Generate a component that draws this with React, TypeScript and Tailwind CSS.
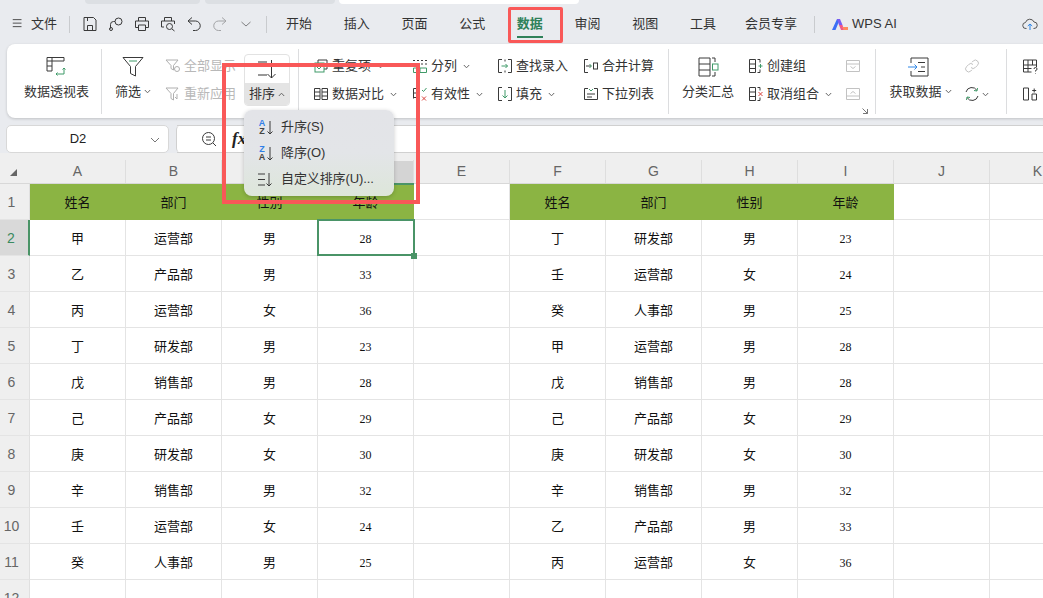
import type { ReactNode } from "react";

const uiFont = { fontFamily: '"Liberation Sans", "Noto Sans CJK SC", sans-serif' };
const cellFont = { fontFamily: '"Liberation Serif", "Noto Sans CJK SC", serif' };

const leftRows = [
  ["甲", "运营部", "男", "28"],
  ["乙", "产品部", "男", "33"],
  ["丙", "运营部", "女", "36"],
  ["丁", "研发部", "男", "23"],
  ["戊", "销售部", "男", "28"],
  ["己", "产品部", "女", "29"],
  ["庚", "研发部", "女", "30"],
  ["辛", "销售部", "男", "32"],
  ["壬", "运营部", "女", "24"],
  ["癸", "人事部", "男", "25"],
];

const rightRows = [
  ["丁", "研发部", "男", "23"],
  ["壬", "运营部", "女", "24"],
  ["癸", "人事部", "男", "25"],
  ["甲", "运营部", "男", "28"],
  ["戊", "销售部", "男", "28"],
  ["己", "产品部", "女", "29"],
  ["庚", "研发部", "女", "30"],
  ["辛", "销售部", "男", "32"],
  ["乙", "产品部", "男", "33"],
  ["丙", "运营部", "女", "36"],
];

const columns = ["A", "B", "C", "D", "E", "F", "G", "H", "I", "J", "K"];
const header = ["姓名", "部门", "性别", "年龄"];
const tabs = ["开始", "插入", "页面", "公式", "数据", "审阅", "视图", "工具"];

function Ico({ size = 16, children, className = "" }: { size?: number; children: ReactNode; className?: string }) {
  return (
    <svg width={size} height={size} viewBox="0 0 16 16" fill="none" stroke="#3a3a3a" strokeWidth="1" className={`shrink-0 ${className}`}>
      {children}
    </svg>
  );
}

function Chevron({ up = false }: { up?: boolean }) {
  return (
    <svg width="7" height="5" viewBox="0 0 7 5" fill="none" stroke="#666" strokeWidth="1" className="shrink-0">
      <path d={up ? "M.8 4 3.5 1.2 6.2 4" : "M.8 1 3.5 3.8 6.2 1"} />
    </svg>
  );
}

function Divider() {
  return <div className="h-[65px] w-px shrink-0 self-center bg-[#dcdddf]" />;
}

function Row({ icon, label, chevron, muted }: { icon: ReactNode; label: string; chevron?: boolean; muted?: boolean }) {
  return (
    <div className={`flex h-[28px] items-center gap-[3px] ${muted ? "text-[#b8b8b8]" : "text-[#333]"}`}>
      {icon}
      <span className="whitespace-nowrap">{label}</span>
      {chevron && (
        <span className="ml-[3px]">
          <Chevron />
        </span>
      )}
    </div>
  );
}

function Big({ icon, label, chevron, className = "" }: { icon: ReactNode; label: string; chevron?: boolean; className?: string }) {
  return (
    <div className={`flex h-[56px] shrink-0 flex-col items-center text-[#333] ${className}`}>
      <div className="flex h-[25px] items-end">{icon}</div>
      <div className="mt-[5px] flex items-center gap-[3px] whitespace-nowrap">
        {label}
        {chevron && <Chevron />}
      </div>
    </div>
  );
}

function TopBar() {
  return (
    <div className="flex h-[40px] items-center text-[13px] text-[#333]">
      <Ico size={14} className="ml-[11px]">
        <path d="M2 3h10M2 7h10M2 11h10" />
      </Ico>
      <span className="ml-[6px] whitespace-nowrap">文件</span>
      <div className="ml-[12px] h-[17px] w-px bg-[#c9cbce]" />
      <div className="ml-[12px] flex items-center gap-[10px]">
        <Ico>
          <path d="M2 1.500h9.500l2.500 2.500v10.500H2z" />
          <path d="M5.500 14.500V9.500h5v5M5.500 1.500V5" />
        </Ico>
        <Ico>
          <circle cx="10.500" cy="5.500" r="3.500" />
          <path d="M7 5.500H5.500A3 3 0 0 0 2.500 8.500v4" />
          <circle cx="3" cy="13" r="1.500" />
        </Ico>
        <Ico>
          <path d="M4.500 5V1.500h7V5M4 11.500H1.500V5h13v6.500H12" />
          <path d="M4.500 9h7v5.500h-7z" />
        </Ico>
        <Ico>
          <path d="M4.500 5V1.500h7V5M4 11H1.500V5h13v3" />
          <circle cx="9.500" cy="10.500" r="3" />
          <path d="m12 13 2.500 2" />
        </Ico>
        <Ico>
          <path d="M6 1.500 2 5l4 3.500" />
          <path d="M2.500 5h7a3.800 3.800 0 0 1 0 9.500H7" />
        </Ico>
        <Ico className="opacity-40">
          <path d="M10 1.500 14 5l-4 3.500" />
          <path d="M13.500 5h-7a3.800 3.800 0 0 0 0 9.500H9" />
        </Ico>
        <Ico className="opacity-60">
          <path d="m3.500 6 4.500 4 4.500-4" />
        </Ico>
      </div>
      <div className="ml-[12px] h-[17px] w-px bg-[#c9cbce]" />
      <div className="ml-[19px] flex items-center gap-[31.7px]">
        {tabs.map((tab) =>
          tab === "数据" ? (
            <div key={tab} className="relative whitespace-nowrap font-bold text-[#2f8159]">
              {tab}
              <div className="absolute -bottom-[4px] left-0 h-[2px] w-full bg-[#2f8159]" />
            </div>
          ) : (
            <span key={tab} className="whitespace-nowrap">
              {tab}
            </span>
          ),
        )}
      </div>
      <span className="ml-[29px] whitespace-nowrap">会员专享</span>
      <div className="ml-[17px] h-[17px] w-px bg-[#c9cbce]" />
      <svg width="16" height="12" viewBox="0 0 16 12" className="ml-[17px] shrink-0">
        <path d="M0 12 5 1h3L3.500 12z" fill="#3b6ff5" />
        <path d="M5 1h3l2.500 6H7z" fill="#7a5cf0" />
        <path d="M7 7h3.500L12 12H9z" fill="#f0568a" />
        <path d="M10 9h6v3h-4z" fill="#ff8a5c" />
      </svg>
      <span className="ml-[4px] whitespace-nowrap">WPS AI</span>
      <svg width="16" height="14" viewBox="0 0 16 14" fill="none" strokeWidth="1" className="ml-[125px] shrink-0" stroke="#555">
        <path d="M4.500 11.500H4a3 3 0 0 1-.5-6A4.500 4.500 0 0 1 12 5a3.200 3.200 0 0 1 0 6.500h-.5" />
        <path d="M8 13V7M5.800 9 8 7l2.200 2" stroke="#2f86e6" />
      </svg>
    </div>
  );
}

function Ribbon() {
  const green = "#3f9a68";
  const red = "#d9453f";
  return (
    <div className="ml-[7px] flex h-[74px] w-[1120px] items-stretch rounded-[8px] bg-white text-[13px] shadow-[0_1px_3px_rgba(0,0,0,0.18)]">
      <div className="flex w-[94px] shrink-0 justify-center pl-[5px] pt-[8px]">
        <Big
          label="数据透视表"
          icon={
            <svg width="20" height="21" viewBox="0 0 20 21" fill="none" stroke="#3a3a3a">
              <path d="M1 15V1.500h17V5H1M6 1.500V15H1M6 10H1" />
              <path d="M10 18h8v-6M16.500 13.500 18 12l1.500 1.500M11.500 16.500 10 18l1.500 1.500" stroke={green} />
            </svg>
          }
        />
      </div>
      <Divider />
      <div className="flex w-[196px] shrink-0 pl-[13px] pt-[8px]">
        <Big
          label="筛选"
          chevron
          className="w-[36px]"
          icon={
            <svg width="22" height="21" viewBox="0 0 22 21" fill="none" stroke="#3a3a3a">
              <path d="M1 1.500h20l-7.500 9V20l-5-2.500v-7z" />
              <path d="M7 5h8" stroke={green} />
            </svg>
          }
        />
        <div className="ml-[14px] w-[79px] shrink-0">
          <Row
            muted
            label="全部显示"
            icon={
              <Ico className="opacity-40">
                <path d="M1 2h12L8.500 7.500V12L6 10.500v-3z" />
                <circle cx="12" cy="11" r="2.500" />
              </Ico>
            }
          />
          <Row
            muted
            label="重新应用"
            icon={
              <Ico className="opacity-40">
                <path d="M1 2h12L8.500 7.500V14L6 12.500v-5z" />
                <path d="M12 8v5l-2-2" />
              </Ico>
            }
          />
        </div>
        <div className="mt-[2px] flex h-[52px] w-[46px] shrink-0 flex-col overflow-hidden rounded-[4px] border border-[#e2e2e2]">
          <div className="flex h-[28px] shrink-0 items-center justify-center">
            <svg width="20" height="19" viewBox="0 0 20 19" fill="none" stroke="#333">
              <path d="M1 2h9M1 15h9M14.500 0v18M10.500 14l4 4 4-4" />
            </svg>
          </div>
          <div className="flex flex-1 items-center justify-center gap-[3px] bg-[#e4e4e4] text-[#333]">
            排序
            <Chevron up />
          </div>
        </div>
      </div>
      <Divider />
      <div className="flex w-[369px] shrink-0 pl-[14px] pt-[8px]">
        <div className="w-[99px] shrink-0">
          <Row
            label="重复项"
            chevron
            icon={
              <Ico>
                <path d="M5 5V2h9v9h-3" />
                <rect x="2" y="5" width="9" height="9" stroke={green} />
                <path d="m4 9 2 2 3-3" stroke={green} />
              </Ico>
            }
          />
          <Row
            label="数据对比"
            chevron
            icon={
              <Ico>
                <path d="M1.500 2.500h5.500v11H1.500zM1.500 6h5.500M1.500 10h5.500M9 2.500h5.500v11H9zM9 6h5.500M9 10h5.500" />
              </Ico>
            }
          />
        </div>
        <div className="w-[85px] shrink-0">
          <Row
            label="分列"
            chevron
            icon={
              <Ico>
                <path d="M1 2.500h14M1 6h14" strokeDasharray="2 2" />
                <path d="M1.500 10h13v4.500h-13zM8 10v4.500" stroke={green} />
              </Ico>
            }
          />
          <Row
            label="有效性"
            chevron
            icon={
              <Ico>
                <path d="M1.500 2.500H8M1.500 7H8M1.500 11.500H7M1.500 2.500v10" />
                <path d="m10 4 1.500 1.500L14.500 2" stroke={green} />
                <path d="m10 10.500 4 4M14 10.500l-4 4" stroke={red} />
              </Ico>
            }
          />
        </div>
        <div className="w-[86px] shrink-0">
          <Row
            label="查找录入"
            icon={
              <Ico>
                <path d="M5 1.500H1.500v13H5M11 1.500h3.500v13H11M8 1.500v2M8 12.500v2" />
                <path d="M4.500 8h6M8.500 6l2 2-2 2" stroke={green} />
              </Ico>
            }
          />
          <Row
            label="填充"
            chevron
            icon={
              <Ico>
                <path d="M5 1.500H1.500v13H5M11 1.500h3.500v13H11" />
                <path d="M8 4v8M5.500 9.500 8 12l2.500-2.500" stroke={green} />
              </Ico>
            }
          />
        </div>
        <div className="shrink-0">
          <Row
            label="合并计算"
            icon={
              <Ico>
                <path d="M5 1.500H1.500v13H5M3 8h5" />
                <path d="m6.500 6 2 2-2 2" stroke={green} />
                <rect x="10.500" y="5" width="4" height="6" />
              </Ico>
            }
          />
          <Row
            label="下拉列表"
            icon={
              <Ico>
                <path d="M5 2.500H1.500v11h13v-11H11M4 8h8M4 11h5" />
                <path d="m6 3 2 2 2-2" stroke={green} />
              </Ico>
            }
          />
        </div>
      </div>
      <Divider />
      <div className="relative flex w-[206px] shrink-0 pl-[13px] pt-[8px]">
        <Big
          label="分类汇总"
          icon={
            <svg width="21" height="20" viewBox="0 0 21 20" fill="none" stroke="#3a3a3a">
              <path d="M1 1h11v18H1zM1 7h11M1 13h11M14 1h3M14 19h3M17 1v4M17 15v4" />
              <rect x="14.500" y="7" width="5.500" height="6" stroke={green} />
            </svg>
          }
        />
        <div className="ml-[14px] w-[98px] shrink-0">
          <Row
            label="创建组"
            icon={
              <Ico>
                <path d="M1.500 1.500h6v13h-6zM1.500 6h6M1.500 10.500h6M9.500 1.500h2.500v3M9.500 14.500h2.500v-3" />
                <path d="M10.500 8h4M12.500 6v4" stroke={green} />
              </Ico>
            }
          />
          <Row
            label="取消组合"
            chevron
            icon={
              <Ico>
                <path d="M1.500 1.500h6v13h-6zM1.500 6h6M1.500 10.500h6M9.500 1.500h2.500v3M9.500 14.500h2.500v-3" />
                <path d="m10.500 6 4 4M14.500 6l-4 4" stroke={red} />
              </Ico>
            }
          />
        </div>
        <div className="-ml-px">
          <div className="flex h-[28px] items-center">
            <Ico className="opacity-30">
              <path d="M1.500 2.500h13v11h-13zM1.500 6h13" />
              <path d="m5.500 8.500 2.500 2 2.500-2" />
            </Ico>
          </div>
          <div className="flex h-[28px] items-center">
            <Ico className="opacity-30">
              <path d="M1.500 2.500h13v11h-13zM1.500 10h13" />
              <path d="m5.500 7.500 2.500-2 2.500 2" />
            </Ico>
          </div>
        </div>
        <svg width="6" height="6" viewBox="0 0 6 6" fill="none" stroke="#777" className="absolute bottom-[4px] right-[7px]">
          <path d="M.5.500l5 5M1 5.500h4.500V1" />
        </svg>
      </div>
      <Divider />
      <div className="flex w-[130px] shrink-0 pl-[13px] pt-[8px]">
        <Big
          label="获取数据"
          chevron
          className="w-[63px]"
          icon={
            <svg width="21" height="20" viewBox="0 0 21 20" fill="none" stroke="#3a3a3a" className="-ml-[4px]">
              <path d="M3 1h17v18H3M3 1v5M3 14v5M10 5.500h7M13 10h4M10 14.500h7" />
              <path d="M0 10h9M6.500 7.500 9 10l-2.500 2.500" stroke="#2f86e6" />
            </svg>
          }
        />
        <div className="ml-[12px]">
          <div className="flex h-[28px] items-center">
            <Ico className="opacity-30">
              <path d="M7 9.500a3 3 0 0 0 4.300 0l2.200-2.200a3 3 0 0 0-4.300-4.300L8 4.200M9 6.500a3 3 0 0 0-4.300 0L2.500 8.700A3 3 0 0 0 6.800 13L8 11.800" />
            </Ico>
          </div>
          <div className="flex h-[28px] items-center gap-[2px]">
            <Ico>
              <path d="M2 6a6 6 0 0 1 11-1.500M14 10a6 6 0 0 1-11 1.500" />
              <path d="m13.500 2-.500 3-3-.500" stroke={green} />
              <path d="m2.500 14 .500-3 3 .500" stroke={green} />
            </Ico>
            <Chevron />
          </div>
        </div>
      </div>
      <Divider />
      <div className="pl-[15px] pt-[8px]">
        <div className="flex h-[28px] items-center">
          <Ico>
            <path d="M1.500 2h13v7M1.500 2v12h8M1.500 7h13M1.500 10.500h8M6 2v12M10.500 2v5" />
            <path d="M12 11a1.500 1.500 0 1 1 1.500 1.500v1M13.500 15v.5" />
          </Ico>
        </div>
        <div className="flex h-[28px] items-center">
          <Ico>
            <path d="M1.500 2h5v12h-5zM10 8h4.500v6H10z" />
            <path d="M12.200 2.500v4M10.200 4.500h4" />
          </Ico>
        </div>
      </div>
    </div>
  );
}

function FormulaBar() {
  return (
    <div className="mt-[7px] flex h-[28px] items-stretch pl-[6px]">
      <div className="relative z-10 flex w-[163px] items-center justify-center rounded-[5px] border border-[#d8d8d8] bg-white pr-[19px] text-[13px] text-[#222]">
        D2
        <svg width="10" height="6" viewBox="0 0 10 6" fill="none" stroke="#777" className="absolute right-[8px] top-[11px]">
          <path d="m1 1 4 4 4-4" />
        </svg>
      </div>
      <div className="relative ml-[8px] flex flex-1 items-center border-y border-[#d0d0d0] bg-white">
        <div className="absolute -left-px -top-px bottom-[-1px] w-[8px] rounded-l-[5px] border-l border-[#d0d0d0]" />
        <svg width="16" height="16" viewBox="0 0 16 16" fill="none" stroke="#3a3a3a" className="ml-[24px]">
          <circle cx="7.500" cy="7.500" r="6" />
          <path d="M5 6h5M5 9h5M12 12l3 3" />
        </svg>
        <span className="ml-[15px] italic text-[#222]" style={{ fontFamily: '"Liberation Serif", serif', fontSize: 17, fontWeight: 700 }}>
          fx
        </span>
      </div>
    </div>
  );
}

function Cell({ children, green, mono }: { children?: ReactNode; green?: boolean; mono?: boolean }) {
  return (
    <div
      className={`flex items-center justify-center border-r border-b pt-[2px] text-[#111] ${
        green ? "border-[#8bb443] bg-[#8bb443]" : "border-[#e4e4e4] bg-white"
      } ${mono ? "text-[12px]" : "text-[13px]"}`}
    >
      {children}
    </div>
  );
}

function RowHead({ label, active }: { label: string; active?: boolean }) {
  return (
    <div
      className={`flex items-center justify-center border-b border-r border-b-[#e4e4e4] pr-[6px] pt-[1px] text-[14px] ${
        active ? "border-r-2 border-r-[#4a9467] bg-[#d9d9d9] text-[#3a8a60]" : "border-r-[#e0e0e0] bg-[#efefef] text-[#666]"
      }`}
      style={uiFont}
    >
      {label}
    </div>
  );
}

function Sheet() {
  const rows = Array.from({ length: 10 }, (_, i) => i);
  return (
    <div className="relative">
      <div className="grid grid-cols-[30px_repeat(11,96px)] grid-rows-[31px_36px_repeat(11,36px)]" style={cellFont}>
        <div className="flex items-end border-b border-[#d8d8d8] bg-[#efefef] pb-[7px] pl-[10px]">
          <div className="h-0 w-0 border-b-[7px] border-l-[7px] border-b-[#666] border-l-transparent" />
        </div>
        {columns.map((col) => (
          <div
            key={col}
            className={`flex items-end justify-center border-b border-[#d8d8d8] pb-[4px] text-[14px] ${
              col === "D" ? "bg-[linear-gradient(#efefef_8px,#d4d4d4_8px)]" : "bg-[#efefef]"
            } text-[#666]`}
            style={uiFont}
          >
            <div className="-mb-[4px] flex h-[23px] w-full items-center justify-center border-r border-[#dedede]">{col}</div>
          </div>
        ))}

        <RowHead label="1" />
        {header.map((h) => (
          <Cell key={`l-${h}`} green>
            {h}
          </Cell>
        ))}
        <Cell />
        {header.map((h) => (
          <Cell key={`r-${h}`} green>
            {h}
          </Cell>
        ))}
        <Cell />
        <Cell />

        {rows.map((i) => (
          <div key={i} className="contents">
            <RowHead label={String(i + 2)} active={i === 0} />
            {leftRows[i].map((v, k) => (
              <Cell key={k} mono={k === 3}>
                {v}
              </Cell>
            ))}
            <Cell />
            {rightRows[i].map((v, k) => (
              <Cell key={k} mono={k === 3}>
                {v}
              </Cell>
            ))}
            <Cell />
            <Cell />
          </div>
        ))}

        <RowHead label="12" />
        {columns.map((col) => (
          <Cell key={col} />
        ))}
      </div>
      {/* selected cell D2 */}
      <div className="absolute left-[317px] top-[66px] h-[37px] w-[98px] border-2 border-[#4a9467]" />
      <div className="absolute left-[411px] top-[100px] h-[6px] w-[6px] bg-[#4a9467]" />
      <div className="absolute left-[318px] top-[30px] h-[2px] w-[96px] bg-[#4a9467]" />
    </div>
  );
}

function SortMenu() {
  return (
    <div className="absolute left-[244px] top-[110px] z-20 flex h-[86px] w-[150px] flex-col justify-center rounded-[8px] bg-gradient-to-b from-[#e3e4e8] via-[#e3e5e8] to-[#dde6da] text-[13px] tracking-[-0.1px] text-[#333] shadow-[0_1px_4px_rgba(0,0,0,0.2)]">
      {[
        { label: "升序(S)", top: "A", bottom: "Z" },
        { label: "降序(O)", top: "Z", bottom: "A" },
      ].map((item) => (
        <div key={item.label} className="flex h-[26px] items-center pl-[13px]">
          <div className="flex w-[10px] flex-col items-center text-[9px] font-bold leading-[8px]">
            <span className="text-[#2f7fe8]">{item.top}</span>
            <span className="text-[#444]">{item.bottom}</span>
          </div>
          <svg width="6" height="15" viewBox="0 0 6 15" fill="none" stroke="#3a3a3a">
            <path d="M3 1v13M.5 11.500 3 14l2.500-2.500" />
          </svg>
          <span className="ml-[8px]">{item.label}</span>
        </div>
      ))}
      <div className="flex h-[26px] items-center pl-[13px]">
        <svg width="16" height="15" viewBox="0 0 16 15" fill="none" stroke="#3a3a3a">
          <path d="M1 2h7M1 7.500h7M1 13h7M12 1v13M9.500 11.500 12 14l2.500-2.500" />
        </svg>
        <span className="ml-[8px] whitespace-nowrap">自定义排序(U)...</span>
      </div>
    </div>
  );
}

export default function App() {
  return (
    <div className="relative h-[598px] w-[1043px] overflow-hidden bg-[#e9ebef]" style={uiFont}>
      <div className="flex h-[4px] items-end">
        <div className="ml-[85px] h-[4px] w-[115px] rounded-b-[4px] bg-[#dcdfe3]" />
        <div className="ml-[5px] h-[4px] w-[130px] rounded-b-[4px] bg-[#dcdfe3]" />
        <div className="ml-[4px] h-[4px] w-[240px] rounded-b-[4px] bg-white" />
      </div>
      <TopBar />
      <Ribbon />
      <FormulaBar />
      <Sheet />
      <SortMenu />
      {/* red annotation boxes */}
      <div className="absolute left-[508px] top-[7px] z-30 h-[36px] w-[55px] rounded-[2px] border-[3px] border-[#f95858]" />
      <div className="absolute left-[222px] top-[63px] z-30 h-[141px] w-[198px] border-[4px] border-[#f95858]" />
    </div>
  );
}
